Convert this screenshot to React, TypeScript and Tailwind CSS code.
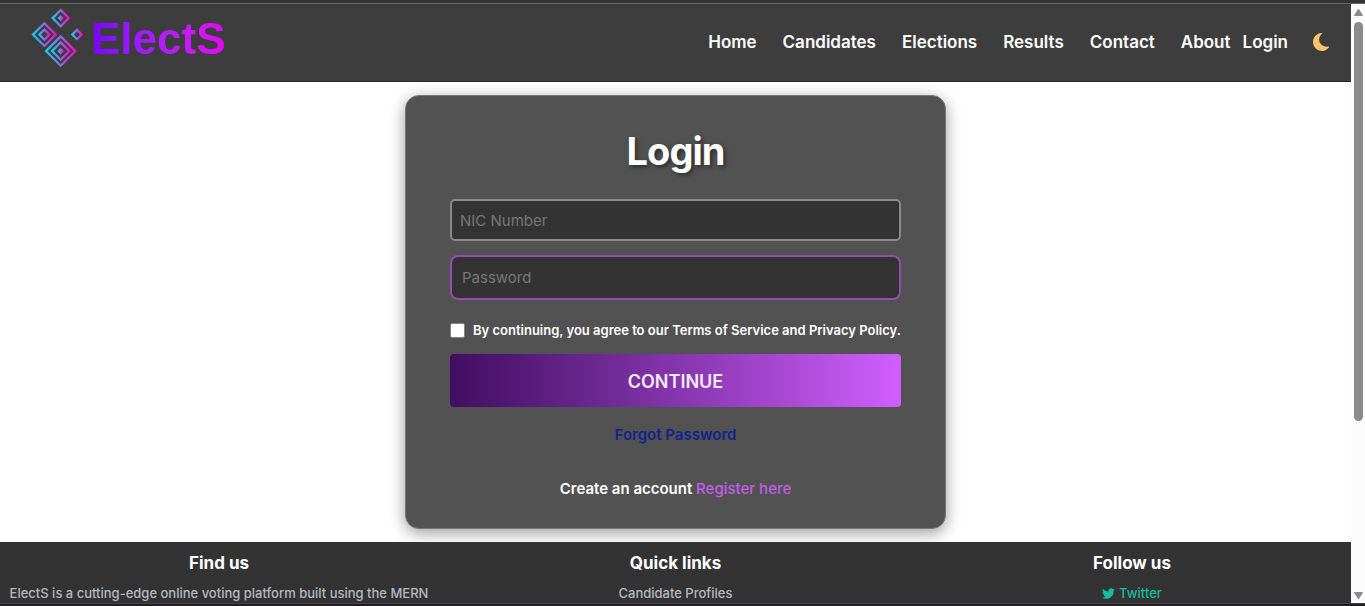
import { FaTwitter } from "react-icons/fa";

const links = ["Home", "Candidates", "Elections", "Results", "Contact"];

function Logo() {
  return (
    <a href="#home" className="flex items-start gap-2" aria-label="ElectS">
      <svg viewBox="0 0 52 60" className="h-[60px] w-[52px]" fill="none" strokeWidth="2.2" aria-hidden="true">
        <defs>
          <linearGradient id="mark" x1="0" x2="1" y1="0.5" y2="0.5">
            <stop offset="0" stopColor="#12cdfa" />
            <stop offset="0.5" stopColor="#8a6be0" />
            <stop offset="1" stopColor="#fa08d0" />
          </linearGradient>
        </defs>
        <g stroke="url(#mark)">
          <path d="M29.7 2 37.8 10.1 29.7 18.2 21.6 10.1Z" />
          <path d="M13.4 15.2 24.8 26.6 13.4 38 2 26.6Z" />
          <path d="M13.4 21.5 18.5 26.6 13.4 31.7 8.3 26.6Z" />
          <path d="M46 21.9 50.7 26.6 46 31.3 41.3 26.6Z" />
          <path d="M29.7 28.4 44.4 43.1 29.7 57.8 15 43.1Z" />
          <path d="M29.7 34.4 38.4 43.1 29.7 51.8 21 43.1Z" />
        </g>
        <g fill="url(#mark)">
          <path d="M29.7 6.9 32.9 10.1 29.7 13.3 26.5 10.1Z" />
          <path d="M29.7 39.7 33.1 43.1 29.7 46.5 26.3 43.1Z" />
        </g>
      </svg>
      <span className="bg-linear-to-r from-[#7a00ff] to-[#e800f8] bg-clip-text font-['Liberation_Sans',sans-serif] text-[44px] leading-[62px] font-bold text-transparent">
        ElectS
      </span>
    </a>
  );
}

function Moon() {
  return (
    <svg viewBox="0 0 18 20" className="h-5 w-[18px] fill-current" aria-hidden="true">
      <path d="M9.6 1C4.8 1.2 1 5.2 1 10.1 1 15.2 5 19 10 19c3.2 0 5.7-1.5 7.2-3.9.2-.4-.1-.7-.5-.6C11.500 15.400 7.100 12.400 7.100 7.600c0-2.300 1-4.300 2.900-5.900.4-.3.100-.7-.4-.7Z" />
    </svg>
  );
}

function Header() {
  return (
    <header className="flex h-[78px] shrink-0 items-start justify-between border-b border-[#292929] bg-[#3d3d3d] pt-1 pr-[21px] pl-[31px]">
      <Logo />
      <nav className="flex items-center pt-4 text-[17px] leading-9 font-semibold text-white">
        <div className="flex gap-[26px]">
          {links.map((label) => (
            <a key={label} href={`#${label.toLowerCase()}`}>{label}</a>
          ))}
          <a href="#about">About</a>
        </div>
        <a href="#login" className="ml-3">Login</a>
        <button type="button" aria-label="Toggle dark mode" className="ml-6 text-[#ffc36b]">
          <Moon />
        </button>
      </nav>
    </header>
  );
}

function LoginCard() {
  return (
    <form className="flex w-[541px] flex-col rounded-[14px] border border-[#777] bg-[#525252] px-11 pt-[31px] pb-[27px] text-white shadow-[0_4px_16px_rgba(0,0,0,0.4)]">
      <h1 className="text-center text-[38px] leading-12 font-bold tracking-tight [text-shadow:2px_2px_4px_rgba(0,0,0,0.5)]">
        Login
      </h1>
      <input
        type="text"
        aria-label="NIC Number"
        placeholder="NIC Number"
        className="mt-6 h-[42px] rounded-[5px] border-2 border-[#8a8a8a] bg-[#333] px-2 text-[15px] placeholder:text-[#777]"
      />
      <input
        type="password"
        aria-label="Password"
        placeholder="Password"
        className="mt-[14px] h-[45px] rounded-lg border-2 border-[#984bb0] bg-[#333] px-[10px] text-[15px] placeholder:text-[#777]"
      />
      <label className="mt-5 flex items-center gap-2 text-[13px] leading-5 font-semibold whitespace-nowrap">
        <input type="checkbox" className="size-[15px] shrink-0 appearance-none rounded-[2px] border border-[#858585] bg-white" />
        By continuing, you agree to our Terms of Service and Privacy Policy.
      </label>
      <button
        type="submit"
        className="mt-[14px] h-[53px] rounded-[4px] bg-linear-to-r from-[#410e61] to-[#d15fff] pt-0.5 text-lg font-semibold text-[#f5eafa]"
      >
        CONTINUE
      </button>
      <a href="#forgot" className="mt-4 text-center text-[15px] leading-6 font-semibold text-[#14228f]">
        Forgot Password
      </a>
      <p className="mt-[30px] text-center text-[15px] leading-6 font-semibold">
        Create an account{" "}
        <a href="#register" className="font-medium text-[#c65de8]">Register here</a>
      </p>
    </form>
  );
}

function Footer() {
  return (
    <footer className="grid flex-1 grid-cols-[438fr_475fr_438fr] bg-[#333] pt-2 text-center text-[13px] leading-5 font-medium text-[#b5bac0]">
      <section>
        <h2 className="mb-[7px] text-[17px] leading-[26px] font-bold text-white">Find us</h2>
        <p className="whitespace-nowrap">ElectS is a cutting-edge online voting platform built using the MERN</p>
      </section>
      <section>
        <h2 className="mb-[7px] text-[17px] leading-[26px] font-bold text-white">Quick links</h2>
        <a href="#profiles">Candidate Profiles</a>
      </section>
      <section>
        <h2 className="mb-[7px] text-[17px] leading-[26px] font-bold text-white">Follow us</h2>
        <a href="#twitter" className="inline-flex items-center gap-1 text-[#1abc9c]">
          <FaTwitter size={13} /> Twitter
        </a>
      </section>
    </footer>
  );
}

function Scrollbar() {
  return (
    <div className="flex w-[14px] shrink-0 flex-col items-center bg-[#fcfcfc] pt-[5px] pb-1" aria-hidden="true">
      <svg viewBox="0 0 9 7" className="h-[7px] w-[9px] fill-[#8b8b8b]">
        <path d="M3.8.6Q4.5-.4 5.2.6L8.8 6Q9 7 8 7H1Q0 7 .2 6Z" />
      </svg>
      <div className="mt-1.5 flex flex-1 flex-col">
        <div className="w-[9px] basis-[70%] rounded-full bg-[#8b8b8b]" />
      </div>
      <svg viewBox="0 0 9 7" className="h-[7px] w-[9px] rotate-180 fill-[#8b8b8b]">
        <path d="M3.8.6Q4.5-.4 5.2.6L8.8 6Q9 7 8 7H1Q0 7 .2 6Z" />
      </svg>
    </div>
  );
}

export default function App() {
  return (
    <div className="flex h-screen flex-col overflow-hidden border-t-3 border-b-2 border-t-[#333] border-b-[#211d25] bg-white font-[Inter,sans-serif]">
      <div className="flex min-h-0 flex-1 border-t border-b border-t-[#666] border-b-[#444]">
        <div className="flex min-w-0 flex-1 flex-col overflow-hidden">
          <Header />
          <main className="flex shrink-0 justify-center py-[13px]">
            <LoginCard />
          </main>
          <Footer />
        </div>
        <Scrollbar />
      </div>
    </div>
  );
}
